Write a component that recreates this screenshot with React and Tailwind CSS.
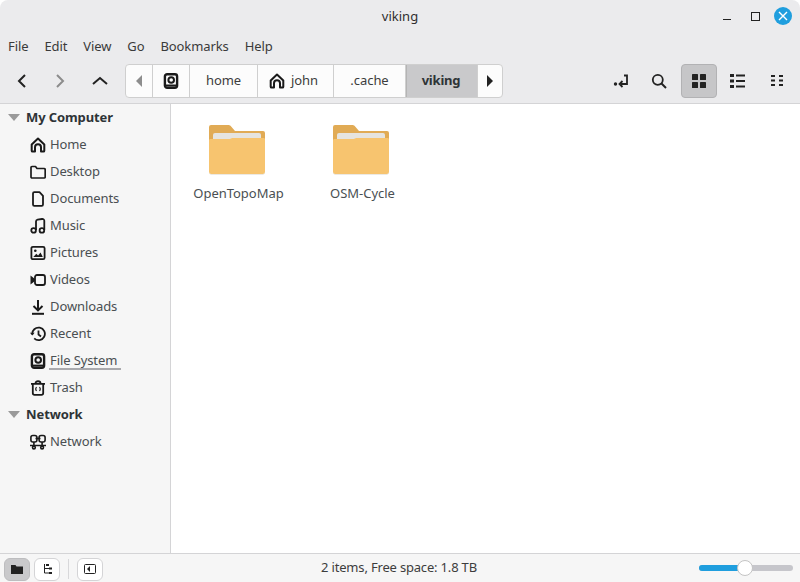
import React from 'react';

const places = [
  ['Home', 'home'],
  ['Desktop', 'folder'],
  ['Documents', 'doc'],
  ['Music', 'music'],
  ['Pictures', 'picture'],
  ['Videos', 'video'],
  ['Downloads', 'download'],
  ['Recent', 'recent'],
  ['File System', 'disk'],
  ['Trash', 'trash'],
];

function Icon({ name, className = 'w-4 h-4' }) {
  const stroke = { fill: 'none', stroke: '#1a1a1a', strokeWidth: 2 };
  return (
    <svg viewBox="0 0 16 16" className={className}>
      {name === 'home' && (
        <path d="M1.7 7.4 8 1.5l6.3 5.9v6.3a.9.9 0 0 1-.9.9H11v-4.4a3 3 0 0 0-6 0v4.4H2.6a.9.9 0 0 1-.9-.9z" {...stroke} strokeLinejoin="round" />
      )}
      {name === 'folder' && (
        <path d="M1 3.5a1 1 0 0 1 1-1h3.5l1.5 2h7a1.2 1.2 0 0 1 1.2 1.2V13a1 1 0 0 1-1 1H2a1 1 0 0 1-1-1z" {...stroke} strokeWidth="1.7" strokeLinejoin="round" />
      )}
      {name === 'doc' && (
        <path d="M3 2.5a1.3 1.3 0 0 1 1.3-1.3h5.2L13 4.8v8.7a1.3 1.3 0 0 1-1.3 1.3H4.3A1.3 1.3 0 0 1 3 13.500z" {...stroke} strokeWidth="1.8" strokeLinejoin="round" />
      )}
      {name === 'music' && (
        <g {...stroke} strokeWidth="1.8">
          <circle cx="3.6" cy="12.4" r="2.3" />
          <circle cx="11.9" cy="12.4" r="2.3" />
          <path d="M6 12V3.500c0-1 .6-1.700 1.600-1.900l4.400-.6c1.300-.1 2.300.5 2.300 1.800V12" />
        </g>
      )}
      {name === 'picture' && (
        <g>
          <rect x="1.4" y="1.8" width="13.2" height="12.4" rx="1.5" {...stroke} strokeWidth="1.8" />
          <circle cx="5.3" cy="5.8" r="1.3" fill="#1a1a1a" />
          <path d="m3.300 12 3-3.200 1.800 1.600 2.400-3 2.300 4.600z" fill="#1a1a1a" />
        </g>
      )}
      {name === 'video' && (
        <g>
          <path d="M.5 3.500 5 7v2L.5 12.500z" fill="#1a1a1a" />
          <rect x="5" y="3" width="10" height="10" rx="2" {...stroke} strokeWidth="1.8" />
        </g>
      )}
      {name === 'download' && (
        <g {...stroke}>
          <path d="M8 1v10M3.500 7 8 11.400 12.500 7" />
          <path d="M2 14.800h12" />
        </g>
      )}
      {name === 'recent' && (
        <g {...stroke} strokeWidth="1.8">
          <path d="M2.300 8.500a6.300 6.300 0 1 1 1.900 3.900" />
          <path d="M8.500 4.500v4l2.500 2" />
          <path d="M0 6.800h4.600L2.300 9.600z" fill="#1a1a1a" stroke="none" />
        </g>
      )}
      {name === 'disk' && (
        <g>
          <rect x="1.9" y="1.2" width="12.2" height="13.6" rx="2.2" fill="none" stroke="#1a1a1a" strokeWidth="2.4" />
          <circle cx="8.2" cy="7" r="2.8" fill="none" stroke="#1a1a1a" strokeWidth="2" />
          <path d="M3 12.600h10" stroke="#1a1a1a" strokeWidth="2" />
        </g>
      )}
      {name === 'trash' && (
        <g {...stroke} strokeWidth="1.8">
          <path d="M1 3.800h14M5.500 3.500c0-3 5-3 5 0" />
          <path d="M2.800 4v9a1.800 1.800 0 0 0 1.800 1.800h6.800a1.800 1.800 0 0 0 1.800-1.800V4" />
          <path d="M6.500 7c-.8 1-.8 3 0 4M9.500 7c.8 1 .8 3 0 4" strokeWidth="1.1" />
        </g>
      )}
      {name === 'network' && (
        <g {...stroke} strokeWidth="1.6">
          <rect x=".9" y="1.5" width="6" height="6.5" rx="2" />
          <rect x="9.1" y="1.5" width="6" height="6.5" rx="2" />
          <path d="M3.900 8v3M12.100 8v3M0 11.500h16" />
          <circle cx="3.9" cy="13.5" r="1.4" />
          <circle cx="12.1" cy="13.5" r="1.4" />
          <path d="M5.500 4.500h5" />
        </g>
      )}
    </svg>
  );
}

function Folder() {
  return (
    <svg viewBox="0 0 56 50" className="w-14 h-[50px]">
      <path d="M0 2a2 2 0 0 1 2-2h17.500a3 3 0 0 1 2 .8L26 6h28a2 2 0 0 1 2 2v20H0z" fill="#e1ab55" />
      <rect x="4" y="8" width="48" height="14" rx="2" fill="#e6e4df" />
      <path d="M0 15.500c0-1 .7-1.500 1.500-1.500h18c1 0 1.600-.3 2.500-.6.800-.4 1.500-.4 2.500-.4h30c1 0 1.500.7 1.500 1.500V47a2 2 0 0 1-2 2H2a2 2 0 0 1-2-2z" fill="#f7c46f" />
      <path d="M0 47a2 2 0 0 0 2 2h52a2 2 0 0 0 2-2v.5a2 2 0 0 1-2 2H2a2 2 0 0 1-2-2z" fill="#d9d4c8" />
    </svg>
  );
}

function SectionHeader({ children }) {
  return (
    <div className="h-[27px] flex items-center">
      <svg viewBox="0 0 12 7" className="w-3 h-[7px] ml-2 mr-[6px]">
        <path d="M0 0h12L6 7z" fill="#9a9a9a" />
      </svg>
      <span className="font-bold text-[#2e3436] tracking-[-0.1px]">{children}</span>
    </div>
  );
}

function Place({ label, icon, mounted }) {
  return (
    <div className="h-[27px] flex items-center pl-[30px]">
      <Icon name={icon} className="w-4 h-4 shrink-0" />
      <span className="relative ml-1 text-[#4a4f52] tracking-[-0.1px]">
        {label}
        {mounted && <span className="absolute -left-px -right-[4px] top-[17px] h-[2px] bg-[#a9a9ad]" />}
      </span>
    </div>
  );
}

function PathSegment({ children, className = '' }) {
  return <div className={`h-full flex items-center justify-center border-r border-[#cfcfcf] ${className}`}>{children}</div>;
}

export default function App() {
  return (
    <div className="w-[800px] h-[582px] overflow-hidden flex flex-col bg-[#ebebed] rounded-t-lg text-[13px] text-[#3d3d3d] font-['Noto_Sans','Open_Sans',sans-serif]">
      {/* title bar */}
      <div className="h-8 shrink-0 flex items-center relative">
        <div className="flex-1 text-center text-[#2f2f2f] pt-px">viking</div>
        <div className="absolute right-2 top-[7px] flex items-center">
          <div className="w-[8px] h-px bg-[#222] mt-[7px] mr-[20px]" />
          <div className="w-[7px] h-[7px] border border-[#222] mr-[14px] box-content" />
          <div className="w-[18px] h-[18px] rounded-full bg-[#1f9ede] flex items-center justify-center">
            <svg viewBox="0 0 10 10" className="w-[10px] h-[10px]">
              <path d="m1 1 8 8M9 1 1 9" stroke="#fff" strokeWidth="1.4" />
            </svg>
          </div>
        </div>
      </div>

      {/* menu bar */}
      <div className="h-[28px] shrink-0 flex items-center pl-2 pt-[2px] gap-[16px] text-[#3a3a3a] tracking-[-0.1px]">
        <span>File</span>
        <span>Edit</span>
        <span>View</span>
        <span>Go</span>
        <span>Bookmarks</span>
        <span>Help</span>
      </div>

      {/* toolbar */}
      <div className="h-11 shrink-0 flex items-center border-b border-[#d4d4d6] pb-[2px]">
        <div className="w-[125px] shrink-0 flex items-center">
          <svg viewBox="0 0 10 14" className="w-[10px] h-[14px] ml-[17px]">
            <path d="M8 1 2 7l6 6" fill="none" stroke="#222" strokeWidth="2" />
          </svg>
          <svg viewBox="0 0 10 14" className="w-[10px] h-[14px] ml-[28px]">
            <path d="m2 1 6 6-6 6" fill="none" stroke="#8c8c8c" strokeWidth="2" />
          </svg>
          <svg viewBox="0 0 16 10" className="w-4 h-[10px] ml-[27px]">
            <path d="m1 8 7-6 7 6" fill="none" stroke="#222" strokeWidth="2" />
          </svg>
        </div>
        <div className="w-[378px] h-[34px] flex items-stretch bg-[#fcfcfc] border border-[#cfcfcf] rounded text-[#3d3d3d] tracking-[-0.05px]">
          <PathSegment className="w-[27px]">
            <svg viewBox="0 0 6 12" className="w-[6px] h-3"><path d="M6 0v12L0 6z" fill="#8d8d8d" /></svg>
          </PathSegment>
          <PathSegment className="w-[37px]"><Icon name="disk" /></PathSegment>
          <PathSegment className="w-[68px]">home</PathSegment>
          <PathSegment className="w-[76px] gap-[6px] pr-1"><Icon name="home" />john</PathSegment>
          <PathSegment className="w-[72px]">.cache</PathSegment>
          <PathSegment className="w-[72px] pr-[2px] bg-[#c9c9cb] border-l border-l-[#b4b4b4] font-bold text-[#2e3436] tracking-[-0.2px]">viking</PathSegment>
          <div className="flex-1 flex items-center justify-center">
            <svg viewBox="0 0 6 12" className="w-[6px] h-3"><path d="M0 0v12l6-6z" fill="#222" /></svg>
          </div>
        </div>
        <div className="flex items-center ml-[110px]">
          <svg viewBox="0 0 16 14" className="w-4 h-[14px]">
            <path d="M11 1.500h3V10H8" fill="none" stroke="#222" strokeWidth="1.8" />
            <path d="M9.500 7 6.500 10l3 3" fill="none" stroke="#222" strokeWidth="1.8" />
            <circle cx="2.5" cy="10" r="1.7" fill="#222" />
          </svg>
          <svg viewBox="0 0 16 16" className="w-4 h-4 ml-[22px]">
            <circle cx="6.8" cy="6.8" r="5" fill="none" stroke="#222" strokeWidth="1.8" />
            <path d="m10.500 10.500 4.500 4.500" stroke="#222" strokeWidth="2" />
          </svg>
          <div className="w-9 h-[34px] ml-[14px] rounded bg-[#c6c6c8] border border-[#b2b2b4] flex items-center justify-center">
            <svg viewBox="0 0 14 14" className="w-[14px] h-[14px]" fill="#222">
              <rect width="6" height="6" rx=".6" />
              <rect x="8" width="6" height="6" rx=".6" />
              <rect y="8" width="6" height="6" rx=".6" />
              <rect x="8" y="8" width="6" height="6" rx=".6" />
            </svg>
          </div>
          <svg viewBox="0 0 15 14" className="w-[15px] h-[14px] ml-[13px]" fill="#222">
            <rect width="4" height="3" />
            <rect y="5.5" width="4" height="3" />
            <rect y="11" width="4" height="3" />
            <rect x="6" y=".5" width="9" height="2" />
            <rect x="6" y="6" width="9" height="2" />
            <rect x="6" y="11.5" width="9" height="2" />
          </svg>
          <svg viewBox="0 0 12 11" className="w-3 h-[11px] ml-[26px]" fill="#222">
            <rect width="4" height="2" />
            <rect x="8" width="4" height="2" />
            <rect y="4.5" width="4" height="2" />
            <rect x="8" y="4.5" width="4" height="2" />
            <rect y="9" width="4" height="2" />
            <rect x="8" y="9" width="4" height="2" />
          </svg>
        </div>
      </div>

      {/* main */}
      <div className="flex-1 min-h-0 flex">
        <aside className="w-[171px] shrink-0 bg-[#f6f6f6] border-r border-[#d4d4d6]">
          <SectionHeader>My Computer</SectionHeader>
          {places.map(([label, icon]) => (
            <Place key={label} label={label} icon={icon} mounted={label === 'File System'} />
          ))}
          <SectionHeader>Network</SectionHeader>
          <Place label="Network" icon="network" />
        </aside>
        <main className="flex-1 bg-white flex items-start pl-1 pt-[21px]">
          {['OpenTopoMap', 'OSM-Cycle'].map((name) => (
            <div key={name} className="w-[124px] flex flex-col items-center">
              <Folder />
              <div className="mt-[9px] ml-[3px] text-[#4a4f52] tracking-[-0.03px]">{name}</div>
            </div>
          ))}
        </main>
      </div>

      {/* status bar */}
      <div className="h-[29px] shrink-0 flex items-center bg-[#f6f6f6] border-t border-[#d4d4d6] relative">
        <div className="w-[26px] h-[23px] ml-1 mt-[2px] rounded-md bg-[#c9c9cb] border border-[#bdbdbf] flex items-center justify-center">
          <svg viewBox="0 0 12 10" className="w-3 h-[10px]"><path d="M0 1h4.500l1 1.500H12V10H0z" fill="#222" /></svg>
        </div>
        <div className="w-[26px] h-[23px] ml-1 mt-[2px] rounded-md bg-white border border-[#d4d4d6] flex items-center justify-center">
          <svg viewBox="0 0 9 11" className="w-[9px] h-[11px]" fill="none" stroke="#222">
            <path d="M1.500 0v9h7M1.500 4.500h6" />
            <path d="M3 1h3M6 4.500h3M6 9h3" strokeWidth="1.8" />
          </svg>
        </div>
        <div className="w-px h-5 ml-2 mt-[2px] bg-[#d8d8da]" />
        <div className="w-[26px] h-[23px] ml-2 mt-[2px] rounded-md bg-white border border-[#d4d4d6] flex items-center justify-center">
          <svg viewBox="0 0 12 10" className="w-3 h-[10px]">
            <rect x=".5" y=".5" width="11" height="9" rx="1" fill="none" stroke="#222" />
            <path d="M6 2v6L3 5z" fill="#222" />
          </svg>
        </div>
        <div className="flex-1 text-center text-[#3d3d3d] -ml-[4px] tracking-[-0.18px]">2 items, Free space: 1.8 TB</div>
        <div className="w-[94px] h-[6px] mr-[7px] rounded-full bg-[#c6c6cb] relative">
          <div className="w-[46px] h-full rounded-full bg-[#1f9ede]" />
          <div className="absolute left-[38px] -top-[5px] w-4 h-4 rounded-full bg-white border border-[#c4c4c4]" />
        </div>
      </div>
    </div>
  );
}
